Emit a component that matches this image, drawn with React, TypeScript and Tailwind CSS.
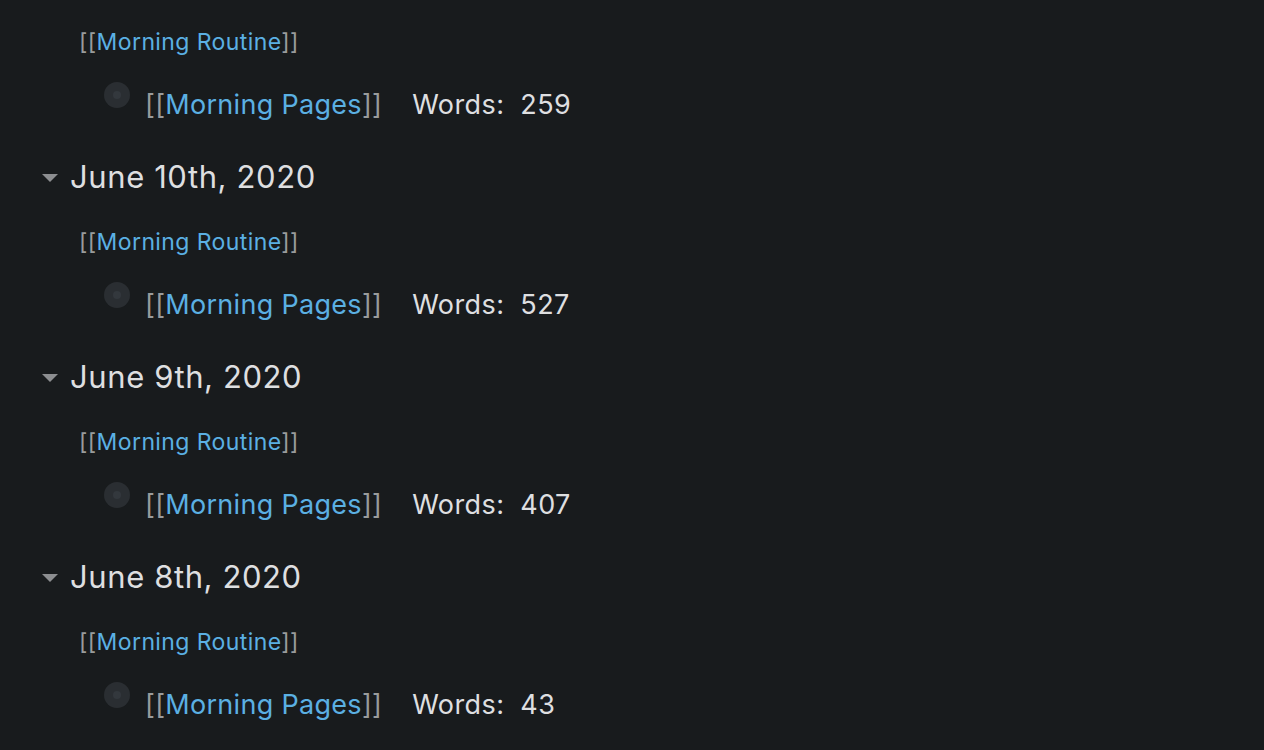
const days = [
  { title: null, words: 259 },
  { title: "June 10th, 2020", words: 527 },
  { title: "June 9th, 2020", words: 407 },
  { title: "June 8th, 2020", words: 43 },
];

function Link({ children, size }: { children: string; size: string }) {
  return (
    <span className={`${size} text-[#999b9c]`}>
      [[<span className="text-[#5bb0e3]">{children}</span>]]
    </span>
  );
}

export default function App() {
  return (
    <div
      className="min-h-[750px] w-full overflow-hidden bg-[#181b1d] pt-[9px]"
      style={{ fontFamily: "Inter, 'Noto Sans', sans-serif" }}
    >
      {days.map((day, i) => (
        <div key={i}>
          {day.title && (
            <div className="flex h-[64px] items-center pl-[41px]">
              <svg width="18" height="10" viewBox="0 0 18 10" className="mr-[11px] mt-[2px]">
                <path d="M1 1 L17 1 L9 9 Z" fill="#8c8e90" />
              </svg>
              <span className="text-[31px] tracking-[0.6px] text-[#dedfe0]">{day.title}</span>
            </div>
          )}
          <div className="flex h-[63px] items-center pl-[79px] pt-[4px]">
            <Link size="text-[23px] tracking-[0.4px]">Morning Routine</Link>
          </div>
          <div className="mb-[10px] flex h-[63px] items-center pl-[104px] pt-[4px]">
            <span className="mr-[15px] -mt-[22px] flex h-[26px] w-[26px] items-center justify-center rounded-full bg-[#2a2e32]">
              <span className="h-[8px] w-[8px] rounded-full bg-[#33383d]" />
            </span>
            <Link size="text-[27px] tracking-[0.3px]">Morning Pages</Link>
            <span className="ml-[30px] text-[27px] tracking-[0.4px] text-[#dedfe0] whitespace-pre">Words:  {day.words}</span>
          </div>
        </div>
      ))}
    </div>
  );
}
